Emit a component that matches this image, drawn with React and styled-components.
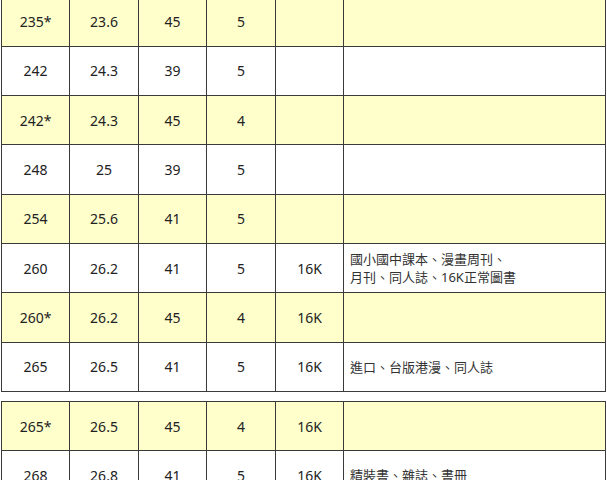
import React from "react";
import styled, { createGlobalStyle } from "styled-components";

const Global = createGlobalStyle`
  html, body {
    margin: 0;
    padding: 0;
    background: #fff;
  }
  body {
    font-family: "Noto Sans", "Noto Sans CJK TC", sans-serif;
    color: #222;
    overflow: hidden;
  }
`;

const Page = styled.div`
  display: flex;
  flex-direction: column;
  gap: 9px;
  padding-left: 1px;
  margin-top: -3.5px;
`;

const Table = styled.table`
  width: 605px;
  border-collapse: collapse;
  table-layout: fixed;
`;

const Row = styled.tr`
  height: 49.3px;
  background: ${({ $hl }) => ($hl ? "#ffffcc" : "#ffffff")};
`;

const Cell = styled.td`
  border: 1px solid #3a3a3a;
  padding: 0;
  text-align: center;
  font-size: 14px;
  color: #222;
  width: ${({ $w }) => $w}px;
`;

const NoteCell = styled.td`
  border: 1px solid #3a3a3a;
  padding: 0 6px;
  text-align: left;
  font-size: 13px;
  line-height: 18px;
  color: #333;
`;

const first = [
  ["235*", "23.6", "45", "5", "", "", true],
  ["242", "24.3", "39", "5", "", "", false],
  ["242*", "24.3", "45", "4", "", "", true],
  ["248", "25", "39", "5", "", "", false],
  ["254", "25.6", "41", "5", "", "", true],
  ["260", "26.2", "41", "5", "16K", "國小國中課本、漫畫周刊、\n月刊、同人誌、16K正常圖書", false],
  ["260*", "26.2", "45", "4", "16K", "", true],
  ["265", "26.5", "41", "5", "16K", "進口、台版港漫、同人誌", false],
];

const second = [
  ["265*", "26.5", "45", "4", "16K", "", true],
  ["268", "26.8", "41", "5", "16K", "精裝書、雜誌、書冊", false],
];

const widths = [67, 68, 67, 68, 67];

const SizeTable = ({ rows }) => (
  <Table>
    <tbody>
      {rows.map((r) => (
        <Row key={r[0]} $hl={r[6]}>
          {r.slice(0, 5).map((v, i) => (
            <Cell key={i} $w={widths[i]}>{v}</Cell>
          ))}
          <NoteCell>
            {r[5].split("\n").map((line, i) => (
              <div key={i}>{line}</div>
            ))}
          </NoteCell>
        </Row>
      ))}
    </tbody>
  </Table>
);

export default function App() {
  return (
    <>
      <Global />
      <Page>
        <SizeTable rows={first} />
        <SizeTable rows={second} />
      </Page>
    </>
  );
}
